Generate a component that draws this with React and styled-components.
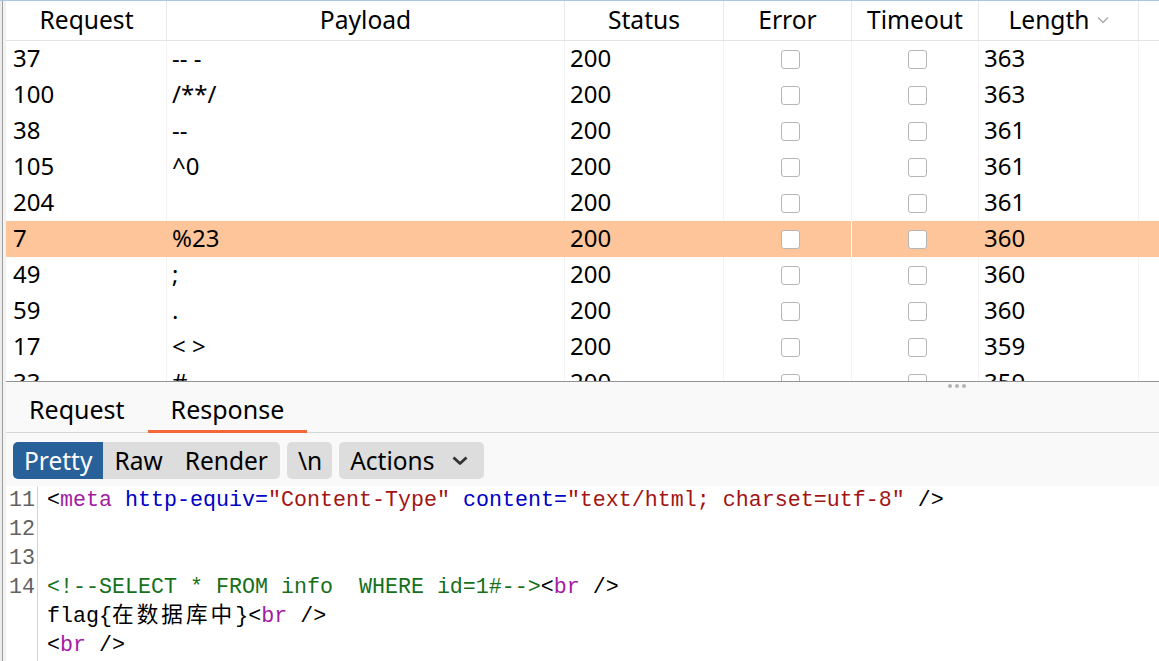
import React from 'react';
import styled, { createGlobalStyle } from 'styled-components';

const Global = createGlobalStyle`
  html, body { margin: 0; padding: 0; background: #fff; }
  body { font-family: "Noto Sans", "Noto Sans CJK SC", sans-serif; color: #000; }
  * { box-sizing: border-box; }
`;

const COLS = '160px 398px 159px 128px 127px 160px 1fr';

const Shell = styled.div`
  width: 1159px;
  height: 661px;
  display: flex;
  overflow: hidden;
  border-top: 1px solid #a9c8e8;
`;

const LeftRail = styled.div`
  flex: none;
  width: 6px;
  border-left: 2px solid #ececec;
  background: #f2f2f2;
  box-shadow: inset 1px 0 0 #9f9f9f;
`;

const Main = styled.div`
  flex: 1;
  min-width: 0;
  display: flex;
  flex-direction: column;
`;

const ResultsTable = styled.div`
  flex: none;
  display: flex;
  flex-direction: column;
  border-bottom: 1px solid #939393;
  background: #fff;
`;

const HeaderRow = styled.div`
  display: grid;
  grid-template-columns: ${COLS};
  height: 40px;
  border-bottom: 1px solid #e3e3e3;
`;

const HeadCell = styled.div`
  display: flex;
  align-items: center;
  justify-content: center;
  gap: 7px;
  padding-bottom: 2px;
  font-size: 24.6px;
  border-left: 1px solid ${(p) => (p.$first ? 'transparent' : '#e8e8e8')};
  white-space: nowrap;
`;

const TableBody = styled.div`
  height: 340px;
  overflow: hidden;
`;

const Row = styled.div`
  display: grid;
  grid-template-columns: ${COLS};
  height: 36px;
  background: ${(p) => (p.$selected ? '#fec59a' : '#fff')};
`;

const Cell = styled.div`
  display: flex;
  align-items: center;
  justify-content: ${(p) => (p.$center ? 'center' : 'flex-start')};
  padding-left: ${(p) => (p.$center ? '5px' : '5px')};
  padding-bottom: ${(p) => (p.$center ? '0' : '3px')};
  font-size: 24px;
  white-space: pre;
  border-left: 1px solid
    ${(p) => (p.$first ? 'transparent' : p.$focusEdge ? '#ffffff' : p.$selected ? 'transparent' : '#f3f3f3')};
  ${(p) => p.$first && 'padding-left: 6px;'}
`;

const Check = styled.span`
  display: block;
  width: 19px;
  height: 19px;
  border: 1.5px solid #b6b6b6;
  border-radius: 3px;
  background: #fff;
`;

const LowerPanel = styled.div`
  flex: 1;
  display: flex;
  flex-direction: column;
  background: #f9f9f9;
  position: relative;
  min-height: 0;
`;

const Grip = styled.div`
  position: absolute;
  top: 2px;
  left: 942px;
  display: flex;
  gap: 3px;
`;

const GripDot = styled.span`
  width: 4px;
  height: 4px;
  border-radius: 50%;
  background: #b4b4b4;
`;

const TabBar = styled.div`
  display: flex;
  height: 51px;
  border-bottom: 1px solid #d6d6d6;
`;

const Tab = styled.div`
  display: flex;
  align-items: center;
  padding: 6px 23px 0;
  margin-bottom: -1px;
  font-size: 25px;
  border-bottom: 3px solid ${(p) => (p.$active ? '#f8673a' : 'transparent')};
`;

const ToolBar = styled.div`
  display: flex;
  gap: 7px;
  padding: 9px 0 7px 7px;
`;

const ButtonGroup = styled.div`
  display: flex;
  height: 37px;
  border-radius: 5px;
  overflow: hidden;
  background: #dddddd;
`;

const Btn = styled.div`
  display: flex;
  align-items: center;
  gap: ${(p) => p.$gap || 13}px;
  padding: 0 ${(p) => p.$pr || 11}px 1px 11px;
  font-size: 24.5px;
  background: ${(p) => (p.$active ? '#28619a' : 'transparent')};
  color: ${(p) => (p.$active ? '#fff' : '#000')};
  white-space: nowrap;
`;

const CodeArea = styled.div`
  flex: 1;
  background: #fff;
  overflow: hidden;
`;

const CodeLine = styled.div`
  display: grid;
  grid-template-columns: 32px 1fr;
  height: 29px;
  font-family: "Liberation Mono", "Noto Sans CJK SC", monospace;
  font-size: 21.67px;
  line-height: 29px;
`;

const Gutter = styled.div`
  text-align: right;
  padding-right: 2px;
  border-right: 1px solid #d4d4d4;
  color: #626262;
`;

const Code = styled.div`
  padding-left: 9px;
  white-space: pre;
  color: #000;
`;

const Tok = styled.span`
  color: ${(p) =>
    ({ tag: '#a21ca2', attr: '#0000c6', val: '#a31414', com: '#16701a' }[p.$k] || '#000')};
`;

const Cjk = styled.span`
  letter-spacing: 3px;
`;

const rows = [
  ['37', '-- -', '200', '363'],
  ['100', '/**/', '200', '363'],
  ['38', '--', '200', '361'],
  ['105', '^0', '200', '361'],
  ['204', '', '200', '361'],
  ['7', '%23', '200', '360', true],
  ['49', ';', '200', '360'],
  ['59', '.', '200', '360'],
  ['17', '< >', '200', '359'],
  ['33', '#', '200', '359'],
];

const SmallChevron = () => (
  <svg width="12" height="8" viewBox="0 0 12 8">
    <path d="M1 1.5 L6 6.5 L11 1.5" fill="none" stroke="#a9a9a9" strokeWidth="1.3" />
  </svg>
);

const ActionChevron = () => (
  <svg width="18" height="11" viewBox="0 0 18 11">
    <path d="M2.5 2.5 L9 8.5 L15.5 2.5" fill="none" stroke="#333" strokeWidth="2.8" strokeLinejoin="round" />
  </svg>
);

export default function App() {
  return (
    <>
      <Global />
      <Shell>
        <LeftRail />
        <Main>
          <ResultsTable>
            <HeaderRow>
              <HeadCell $first>Request</HeadCell>
              <HeadCell>Payload</HeadCell>
              <HeadCell>Status</HeadCell>
              <HeadCell>Error</HeadCell>
              <HeadCell>Timeout</HeadCell>
              <HeadCell>
                Length
                <SmallChevron />
              </HeadCell>
              <HeadCell />
            </HeaderRow>
            <TableBody>
              {rows.map(([req, payload, status, len, sel]) => (
                <Row key={req} $selected={sel}>
                  <Cell $first>{req}</Cell>
                  <Cell $selected={sel}>{payload}</Cell>
                  <Cell $selected={sel}>{status}</Cell>
                  <Cell $center $selected={sel}>
                    <Check />
                  </Cell>
                  <Cell $center $selected={sel} $focusEdge={sel}>
                    <Check />
                  </Cell>
                  <Cell $selected={sel}>{len}</Cell>
                  <Cell $selected={sel} />
                </Row>
              ))}
            </TableBody>
          </ResultsTable>
          <LowerPanel>
            <Grip>
              <GripDot />
              <GripDot />
              <GripDot />
            </Grip>
            <TabBar>
              <Tab>Request</Tab>
              <Tab $active>Response</Tab>
            </TabBar>
            <ToolBar>
              <ButtonGroup>
                <Btn $active>Pretty</Btn>
                <Btn>Raw</Btn>
                <Btn $pr={12}>Render</Btn>
              </ButtonGroup>
              <ButtonGroup>
                <Btn $pr={10}>\n</Btn>
              </ButtonGroup>
              <ButtonGroup>
                <Btn $pr={15} $gap={17}>
                  Actions
                  <ActionChevron />
                </Btn>
              </ButtonGroup>
            </ToolBar>
            <CodeArea>
              <CodeLine>
                <Gutter>11</Gutter>
                <Code>
                  {'<'}
                  <Tok $k="tag">meta</Tok> <Tok $k="attr">http-equiv=</Tok>
                  <Tok $k="val">"Content-Type"</Tok> <Tok $k="attr">content=</Tok>
                  <Tok $k="val">"text/html; charset=utf-8"</Tok>
                  {' />'}
                </Code>
              </CodeLine>
              <CodeLine>
                <Gutter>12</Gutter>
                <Code />
              </CodeLine>
              <CodeLine>
                <Gutter>13</Gutter>
                <Code />
              </CodeLine>
              <CodeLine>
                <Gutter>14</Gutter>
                <Code>
                  <Tok $k="com">{'<!--SELECT * FROM info  WHERE id=1#-->'}</Tok>
                  {'<'}
                  <Tok $k="tag">br</Tok>
                  {' />'}
                </Code>
              </CodeLine>
              <CodeLine>
                <Gutter />
                <Code>
                  {'flag{'}
                  <Cjk>在数据库中</Cjk>
                  {'}<'}
                  <Tok $k="tag">br</Tok>
                  {' />'}
                </Code>
              </CodeLine>
              <CodeLine>
                <Gutter />
                <Code>
                  {'<'}
                  <Tok $k="tag">br</Tok>
                  {' />'}
                </Code>
              </CodeLine>
              <CodeLine>
                <Gutter />
                <Code />
              </CodeLine>
            </CodeArea>
          </LowerPanel>
        </Main>
      </Shell>
    </>
  );
}
